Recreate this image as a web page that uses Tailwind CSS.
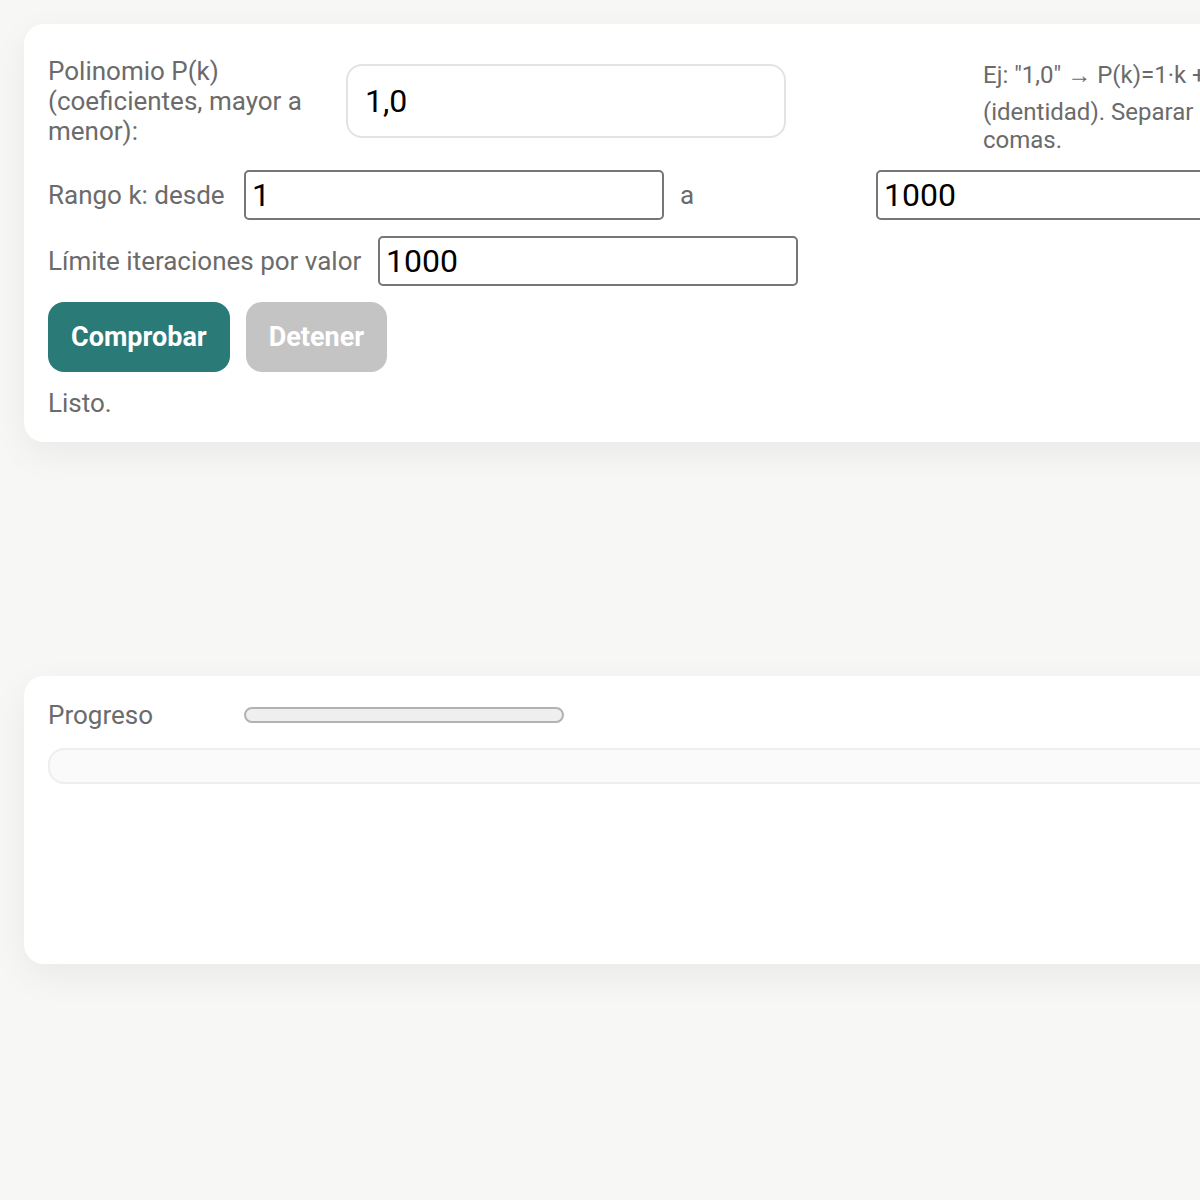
<!DOCTYPE html>
<html lang="es">
<head>
    <meta charset="UTF-8">
    <meta name="viewport" content="width=device-width, initial-scale=1.0">
    <title>Comprobador de polinomios</title>
    <script src="https://cdn.jsdelivr.net/npm/@tailwindcss/browser@4"></script>
</head>

<body class="min-h-screen bg-[#f7f7f5] font-[Roboto,sans-serif] text-[26px] leading-[30px] text-[#6b6b6b]">

    <main class="min-h-screen p-6 pr-0 overflow-hidden">

        <!-- Parámetros -->
        <section class="w-[200%] bg-white rounded-[20px] p-6 shadow-[0_12px_36px_rgba(0,0,0,0.06)]">

            <div class="flex items-center gap-4 mb-4">
                <label for="poly" class="w-[282px] shrink-0">Polinomio P(k)<br>(coeficientes, mayor a<br>menor):</label>
                <input id="poly" type="text" value="1,0" class="w-[440px] h-[74px] px-[17px] border-2 border-[#e3e3e3] rounded-2xl text-[32px] text-black">
                <p class="ml-[181px] pt-1 text-[24px] leading-[28px] whitespace-nowrap">
                    <span class="block leading-[46px]">Ej: "1,0" <span class="font-['Liberation_Serif',serif] leading-none">→</span> P(k)=1·k + 0</span>
                    (identidad). Separar por<br>comas.
                </p>
            </div>

            <div class="flex items-center mb-4">
                <label for="from" class="w-[196px] shrink-0">Rango k: desde</label>
                <input id="from" type="number" value="1" class="w-[420px] h-[50px] px-[6px] border-2 border-[#767676] rounded-[5px] text-[32px] text-black">
                <label for="to" class="w-[196px] shrink-0 ml-4">a</label>
                <input id="to" type="number" value="1000" class="w-[420px] h-[50px] px-[6px] border-2 border-[#767676] rounded-[5px] text-[32px] text-black">
            </div>

            <div class="flex items-center gap-4 mb-4">
                <label for="limit" class="w-[314px] shrink-0">Límite iteraciones por valor</label>
                <input id="limit" type="number" value="1000" class="w-[420px] h-[50px] px-[6px] border-2 border-[#767676] rounded-[5px] text-[32px] text-black">
            </div>

            <div class="flex gap-4 mb-4">
                <button id="start" class="px-[23px] py-5 rounded-2xl bg-[#2a7a78] text-[27px] text-white font-bold">Comprobar</button>
                <button id="stop" disabled class="px-[23px] py-5 rounded-2xl bg-[#c4c4c4] text-[27px] text-white font-bold">Detener</button>
            </div>

            <p id="status">Listo.</p>
        </section>

        <!-- Progreso -->
        <section class="w-[200%] mt-[234px] h-72 bg-white rounded-[20px] p-6 shadow-[0_12px_36px_rgba(0,0,0,0.06)]">
            <div class="flex items-center mb-[18px]">
                <span class="w-[196px]">Progreso</span>
                <div role="progressbar" aria-valuenow="0" aria-label="Progreso" class="w-80 h-4 border-2 border-[#b2b2b2] bg-[#efefef] rounded-full"></div>
            </div>
            <div id="log" class="h-9 border-2 border-[#eee] bg-[#fafafa] rounded-2xl"></div>
        </section>

    </main>

</body>
</html>
